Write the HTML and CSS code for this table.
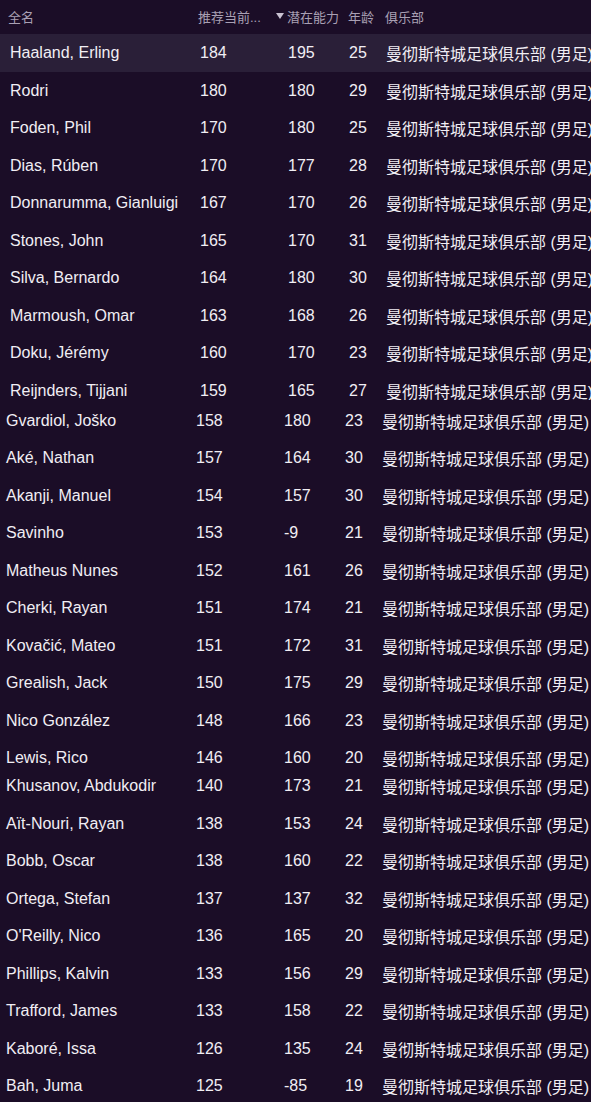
FILE: index.html
```html
<!DOCTYPE html>
<html lang="zh">
<head>
<meta charset="utf-8">
<title>球员列表</title>
<link rel="stylesheet" href="styles.css">
</head>
<body>
<div class="table">
  <div class="head">
    <div class="h-name">全名</div>
    <div class="h-rec">推荐当前...</div>
    <div class="h-pot"><span class="tri"></span>潜在能力</div>
    <div class="h-age">年龄</div>
    <div class="h-club">俱乐部</div>
  </div>

  <div class="block block-a">
    <div class="row selected"><div class="c-name">Haaland, Erling</div><div class="c-rec">184</div><div class="c-pot">195</div><div class="c-age">25</div><div class="c-club">曼彻斯特城足球俱乐部 (男足)</div></div>
    <div class="row"><div class="c-name">Rodri</div><div class="c-rec">180</div><div class="c-pot">180</div><div class="c-age">29</div><div class="c-club">曼彻斯特城足球俱乐部 (男足)</div></div>
    <div class="row"><div class="c-name">Foden, Phil</div><div class="c-rec">170</div><div class="c-pot">180</div><div class="c-age">25</div><div class="c-club">曼彻斯特城足球俱乐部 (男足)</div></div>
    <div class="row"><div class="c-name">Dias, Rúben</div><div class="c-rec">170</div><div class="c-pot">177</div><div class="c-age">28</div><div class="c-club">曼彻斯特城足球俱乐部 (男足)</div></div>
    <div class="row"><div class="c-name">Donnarumma, Gianluigi</div><div class="c-rec">167</div><div class="c-pot">170</div><div class="c-age">26</div><div class="c-club">曼彻斯特城足球俱乐部 (男足)</div></div>
    <div class="row"><div class="c-name">Stones, John</div><div class="c-rec">165</div><div class="c-pot">170</div><div class="c-age">31</div><div class="c-club">曼彻斯特城足球俱乐部 (男足)</div></div>
    <div class="row"><div class="c-name">Silva, Bernardo</div><div class="c-rec">164</div><div class="c-pot">180</div><div class="c-age">30</div><div class="c-club">曼彻斯特城足球俱乐部 (男足)</div></div>
    <div class="row"><div class="c-name">Marmoush, Omar</div><div class="c-rec">163</div><div class="c-pot">168</div><div class="c-age">26</div><div class="c-club">曼彻斯特城足球俱乐部 (男足)</div></div>
    <div class="row"><div class="c-name">Doku, Jérémy</div><div class="c-rec">160</div><div class="c-pot">170</div><div class="c-age">23</div><div class="c-club">曼彻斯特城足球俱乐部 (男足)</div></div>
    <div class="row"><div class="c-name">Reijnders, Tijjani</div><div class="c-rec">159</div><div class="c-pot">165</div><div class="c-age">27</div><div class="c-club">曼彻斯特城足球俱乐部 (男足)</div></div>
  </div>

  <div class="block block-b">
    <div class="row"><div class="c-name">Gvardiol, Joško</div><div class="c-rec">158</div><div class="c-pot">180</div><div class="c-age">23</div><div class="c-club">曼彻斯特城足球俱乐部 (男足)</div></div>
    <div class="row"><div class="c-name">Aké, Nathan</div><div class="c-rec">157</div><div class="c-pot">164</div><div class="c-age">30</div><div class="c-club">曼彻斯特城足球俱乐部 (男足)</div></div>
    <div class="row"><div class="c-name">Akanji, Manuel</div><div class="c-rec">154</div><div class="c-pot">157</div><div class="c-age">30</div><div class="c-club">曼彻斯特城足球俱乐部 (男足)</div></div>
    <div class="row"><div class="c-name">Savinho</div><div class="c-rec">153</div><div class="c-pot">-9</div><div class="c-age">21</div><div class="c-club">曼彻斯特城足球俱乐部 (男足)</div></div>
    <div class="row"><div class="c-name">Matheus Nunes</div><div class="c-rec">152</div><div class="c-pot">161</div><div class="c-age">26</div><div class="c-club">曼彻斯特城足球俱乐部 (男足)</div></div>
    <div class="row"><div class="c-name">Cherki, Rayan</div><div class="c-rec">151</div><div class="c-pot">174</div><div class="c-age">21</div><div class="c-club">曼彻斯特城足球俱乐部 (男足)</div></div>
    <div class="row"><div class="c-name">Kovačić, Mateo</div><div class="c-rec">151</div><div class="c-pot">172</div><div class="c-age">31</div><div class="c-club">曼彻斯特城足球俱乐部 (男足)</div></div>
    <div class="row"><div class="c-name">Grealish, Jack</div><div class="c-rec">150</div><div class="c-pot">175</div><div class="c-age">29</div><div class="c-club">曼彻斯特城足球俱乐部 (男足)</div></div>
    <div class="row"><div class="c-name">Nico González</div><div class="c-rec">148</div><div class="c-pot">166</div><div class="c-age">23</div><div class="c-club">曼彻斯特城足球俱乐部 (男足)</div></div>
    <div class="row"><div class="c-name">Lewis, Rico</div><div class="c-rec">146</div><div class="c-pot">160</div><div class="c-age">20</div><div class="c-club">曼彻斯特城足球俱乐部 (男足)</div></div>
  </div>

  <div class="block block-c">
    <div class="row"><div class="c-name">Khusanov, Abdukodir</div><div class="c-rec">140</div><div class="c-pot">173</div><div class="c-age">21</div><div class="c-club">曼彻斯特城足球俱乐部 (男足)</div></div>
    <div class="row"><div class="c-name">Aït-Nouri, Rayan</div><div class="c-rec">138</div><div class="c-pot">153</div><div class="c-age">24</div><div class="c-club">曼彻斯特城足球俱乐部 (男足)</div></div>
    <div class="row"><div class="c-name">Bobb, Oscar</div><div class="c-rec">138</div><div class="c-pot">160</div><div class="c-age">22</div><div class="c-club">曼彻斯特城足球俱乐部 (男足)</div></div>
    <div class="row"><div class="c-name">Ortega, Stefan</div><div class="c-rec">137</div><div class="c-pot">137</div><div class="c-age">32</div><div class="c-club">曼彻斯特城足球俱乐部 (男足)</div></div>
    <div class="row"><div class="c-name">O'Reilly, Nico</div><div class="c-rec">136</div><div class="c-pot">165</div><div class="c-age">20</div><div class="c-club">曼彻斯特城足球俱乐部 (男足)</div></div>
    <div class="row"><div class="c-name">Phillips, Kalvin</div><div class="c-rec">133</div><div class="c-pot">156</div><div class="c-age">29</div><div class="c-club">曼彻斯特城足球俱乐部 (男足)</div></div>
    <div class="row"><div class="c-name">Trafford, James</div><div class="c-rec">133</div><div class="c-pot">158</div><div class="c-age">22</div><div class="c-club">曼彻斯特城足球俱乐部 (男足)</div></div>
    <div class="row"><div class="c-name">Kaboré, Issa</div><div class="c-rec">126</div><div class="c-pot">135</div><div class="c-age">24</div><div class="c-club">曼彻斯特城足球俱乐部 (男足)</div></div>
    <div class="row"><div class="c-name">Bah, Juma</div><div class="c-rec">125</div><div class="c-pot">-85</div><div class="c-age">19</div><div class="c-club">曼彻斯特城足球俱乐部 (男足)</div></div>
  </div>
</div>
</body>
</html>
```

FILE: styles.css
```css
html, body {
  margin: 0;
  padding: 0;
  background: #1b0d27;
}
body {
  width: 591px;
  height: 1102px;
  overflow: hidden;
  font-family: "Liberation Sans", "Noto Sans CJK SC", sans-serif;
  color: #f1eef4;
}
.table {
  display: flex;
  flex-direction: column;
}
.head {
  height: 34px;
  display: flex;
  align-items: center;
  padding-left: 8px;
  font-size: 13px;
  color: #a9a0b4;
  white-space: nowrap;
  padding-bottom: 2px;
  box-sizing: border-box;
}
.h-name { width: 190px; }
.h-rec { width: 77px; }
.h-pot { width: 73px; display: flex; align-items: center; }
.h-age { width: 37px; }
.tri {
  width: 0;
  height: 0;
  border-left: 4.5px solid transparent;
  border-right: 4.5px solid transparent;
  border-top: 6px solid #c9c2d2;
  margin: 0 3px 0 1px;
}
.block {
  overflow: hidden;
  display: flex;
  flex-direction: column;
}
.block-a { height: 366px; }
.block-b { height: 367px; padding-top: 1.25px; box-sizing: border-box; }
.block-c { height: 340px; }
.row {
  flex: none;
  height: 37.5px;
  box-sizing: border-box;
  padding-top: 1px;
  display: flex;
  align-items: center;
  font-size: 16px;
  white-space: nowrap;
}
.block-a .row { padding-left: 10px; }
.block-b .row, .block-c .row { padding-left: 6px; }
.row.selected { background: #2a1f38; }
.c-name { width: 190px; flex: none; }
.c-rec { width: 88px; flex: none; }
.c-pot { width: 61px; flex: none; }
.c-age { width: 37px; flex: none; }
.c-club { flex: none; }
```
